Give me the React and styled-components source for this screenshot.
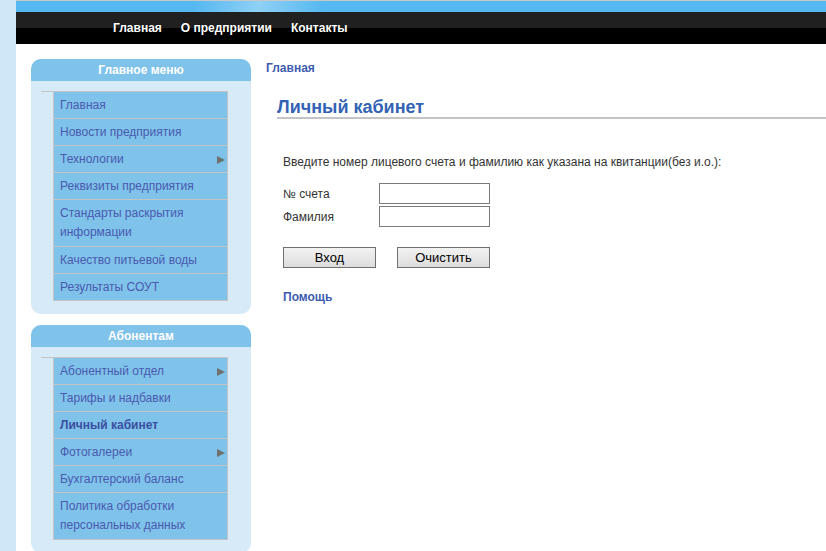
import React from "react";
import styled, { createGlobalStyle } from "styled-components";

const Global = createGlobalStyle`
  html, body { margin: 0; padding: 0; background: #fff; }
  body { font-family: "Liberation Sans", Arial, sans-serif; font-size: 12px; }
`;

const Page = styled.div`
  display: flex;
  min-height: 551px;
`;

const Strip = styled.div`
  width: 16px;
  flex: none;
  background: #d0e7f7;
`;

const Main = styled.div`
  flex: 1;
  display: flex;
  flex-direction: column;
  min-width: 0;
`;

const TopBand = styled.div`
  height: 11px;
  border-top: 1px solid #c8c8c8;
  background: linear-gradient(100deg, #55b8f0 0%, #55b8f0 22%, #8fd0f5 30%, #55b8f0 38%, #55b8f0 100%);
`;

const Nav = styled.nav`
  height: 32px;
  display: flex;
  align-items: center;
  padding-left: 97px;
  gap: 19px;
  background: linear-gradient(#202020 0, #202020 16px, #000 16px, #000 100%);
`;

const NavLink = styled.a`
  color: #fff;
  font-weight: bold;
  font-size: 12px;
  text-decoration: none;
  text-shadow: 0 0 1px rgba(0,0,0,0.6);
`;

const Body = styled.div`
  display: flex;
  padding: 15px 0 0 15px;
  gap: 15px;
`;

const Sidebar = styled.aside`
  width: 220px;
  flex: none;
  display: flex;
  flex-direction: column;
  gap: 11px;
`;

const Panel = styled.section`
  background: #d6eaf8;
  border-radius: 10px;
  padding-bottom: 13px;
`;

const PanelHead = styled.div`
  height: 22px;
  line-height: 22px;
  background: #7fc2ea;
  border-radius: 10px 10px 0 0;
  color: #fff;
  font-weight: bold;
  font-size: 12px;
  text-align: center;
`;

const MenuList = styled.ul`
  list-style: none;
  margin: 10px 0 0 10px;
  padding: 0 0 0 12px;
  width: 175px;
  border-top: 1px solid #c4c4c4;
`;

const MenuItem = styled.li`
  display: flex;
  align-items: center;
  justify-content: space-between;
  background: #7fc2ea;
  border-left: 1px solid #c4c4c4;
  border-right: 1px solid #c4c4c4;
  border-bottom: 1px solid #c4c4c4;
  padding: 4px 2px 3px 6px;
  line-height: 19px;
  font-size: 12px;
  color: ${p => (p.$active ? "#3b4fa0" : "#4a5aaf")};
  font-weight: ${p => (p.$active ? "bold" : "normal")};
  ${p => p.$tall && "padding-bottom: 4px;"}
`;

const Arrow = styled.span`
  width: 0;
  height: 0;
  flex: none;
  border-top: 4px solid transparent;
  border-bottom: 4px solid transparent;
  border-left: 8px solid #707070;
`;

const Content = styled.div`
  flex: 1;
  display: flex;
  flex-direction: column;
  min-width: 0;
`;

const Crumb = styled.a`
  color: #3d5cb0;
  font-weight: bold;
  font-size: 12px;
  line-height: 14px;
  margin-top: 2px;
  text-decoration: none;
`;

const Title = styled.h1`
  margin: 22px 0 0 11px;
  font-size: 18px;
  line-height: 20px;
  font-weight: bold;
  color: #3262b4;
  padding-bottom: 0;
  border-bottom: 2px solid #c4c4c4;
`;

const Form = styled.div`
  padding: 35px 0 0 17px;
  display: flex;
  flex-direction: column;
  color: #333;
  font-size: 12px;
`;

const Intro = styled.p`
  margin: 0 0 13px;
  line-height: 16px;
`;

const Row = styled.div`
  display: grid;
  grid-template-columns: 96px 111px;
  align-items: center;
  margin-bottom: 2px;
`;

const Input = styled.input`
  box-sizing: border-box;
  width: 111px;
  height: 21px;
  border: 1px solid #7a7a7a;
  margin: 0;
  padding: 0 3px;
  font-family: inherit;
`;

const Buttons = styled.div`
  display: flex;
  gap: 21px;
  margin-top: 18px;
`;

const Button = styled.button`
  box-sizing: border-box;
  width: 93px;
  height: 21px;
  border: 1px solid #707070;
  background: linear-gradient(#f2f2f2, #dddddd);
  font-family: "Liberation Sans", Arial, sans-serif;
  font-size: 13px;
  color: #000;
  padding: 0;
`;

const Help = styled.a`
  margin-top: 22px;
  color: #3d5cb0;
  font-weight: bold;
  font-size: 12px;
  text-decoration: none;
`;

const mainMenu = [
  { t: "Главная" },
  { t: "Новости предприятия" },
  { t: "Технологии", arrow: true },
  { t: "Реквизиты предприятия" },
  { t: "Стандарты раскрытия информации", tall: true },
  { t: "Качество питьевой воды" },
  { t: "Результаты СОУТ" },
];

const subMenu = [
  { t: "Абонентный отдел", arrow: true },
  { t: "Тарифы и надбавки" },
  { t: "Личный кабинет", active: true },
  { t: "Фотогалереи", arrow: true },
  { t: "Бухгалтерский баланс" },
  { t: "Политика обработки персональных данных", tall: true },
];

function Menu({ title, items }) {
  return (
    <Panel>
      <PanelHead>{title}</PanelHead>
      <MenuList>
        {items.map(i => (
          <MenuItem key={i.t} $active={i.active} $tall={i.tall}>
            <span>{i.t}</span>
            {i.arrow && <Arrow />}
          </MenuItem>
        ))}
      </MenuList>
    </Panel>
  );
}

export default function App() {
  return (
    <>
      <Global />
      <Page>
        <Strip />
        <Main>
          <TopBand />
          <Nav>
            <NavLink>Главная</NavLink>
            <NavLink>О предприятии</NavLink>
            <NavLink>Контакты</NavLink>
          </Nav>
          <Body>
            <Sidebar>
              <Menu title="Главное меню" items={mainMenu} />
              <Menu title="Абонентам" items={subMenu} />
            </Sidebar>
            <Content>
              <Crumb>Главная</Crumb>
              <Title>Личный кабинет</Title>
              <Form>
                <Intro>Введите номер лицевого счета и фамилию как указана на квитанции(без и.о.):</Intro>
                <Row>
                  <span>№ счета</span>
                  <Input />
                </Row>
                <Row>
                  <span>Фамилия</span>
                  <Input />
                </Row>
                <Buttons>
                  <Button>Вход</Button>
                  <Button>Очистить</Button>
                </Buttons>
                <Help>Помощь</Help>
              </Form>
            </Content>
          </Body>
        </Main>
      </Page>
    </>
  );
}
